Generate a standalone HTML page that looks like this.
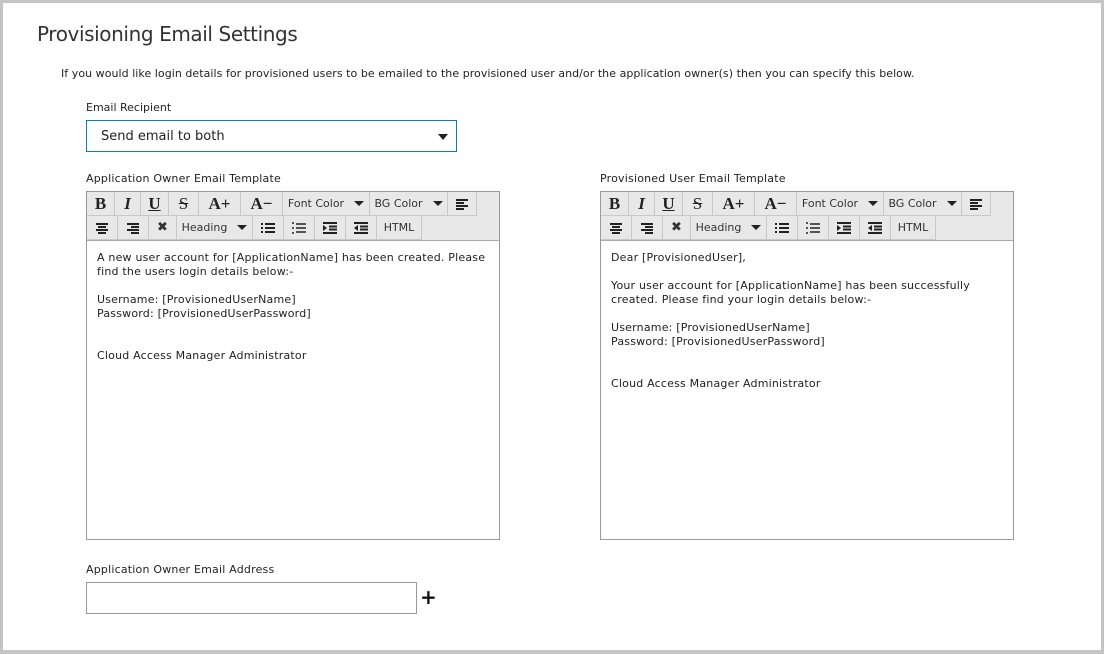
<!DOCTYPE html>
<html><head><style>
*{box-sizing:border-box;margin:0;padding:0}
body{width:1104px;height:654px;background:#c4c4c4;font-family:"DejaVu Sans","Liberation Sans",sans-serif;position:relative;overflow:hidden}
.page{position:absolute;left:3px;top:3px;width:1098px;height:647px;background:#fff}
.abs{position:absolute}
h1{position:absolute;left:34px;top:19px;font-weight:normal;font-size:20px;color:#333;font-family:"DejaVu Sans",sans-serif;letter-spacing:-0.4px}
.t{font-size:11px;color:#222;letter-spacing:0}
.sel{position:absolute;left:83px;top:117px;width:371px;height:32px;border:1px solid #0a7bc1;font-size:13px;color:#222;padding:8px 0 0 14px}
.sel:after{content:"";position:absolute;right:8px;top:13px;border:5px solid transparent;border-top:6px solid #222;border-bottom:0}
.ed{position:absolute;width:414px;height:349px;border:1px solid #999;background:#fff}
.tb{height:49px;background:#e8e8e8;border-bottom:1px solid #aaa;position:relative}
.b{position:absolute;height:24px;border-right:1px solid #c8c8c8;border-bottom:1px solid #c8c8c8;background:#e8e8e8;font-size:11px;color:#333;text-align:center;line-height:23px}
.b.f{font-family:"Liberation Serif",serif;font-weight:bold;font-size:17px;color:#222}
.dd:after{content:"";display:inline-block;margin-left:10px;border:5px solid transparent;border-top:5px solid #222;border-bottom:0;vertical-align:1px}
.body{padding:10px;font-size:11px;line-height:14px;color:#222;letter-spacing:0.2px;white-space:nowrap}
.ic{display:inline-block;vertical-align:middle}
</style></head><body><div class="page">
<h1>Provisioning Email Settings</h1>
<div class="abs t" style="left:58px;top:64px;letter-spacing:0.05px">If you would like login details for provisioned users to be emailed to the provisioned user and/or the application owner(s) then you can specify this below.</div>
<div class="abs t" style="left:83px;top:98px">Email Recipient</div>
<div class="sel">Send email to both</div>
<div class="abs t" style="left:83px;top:169px;letter-spacing:0.2px">Application Owner Email Template</div>
<div class="abs t" style="left:597px;top:169px;letter-spacing:0.2px">Provisioned User Email Template</div>

<div class="ed" style="left:83px;top:188px" id="e1"></div>
<div class="ed" style="left:597px;top:188px" id="e2"></div>

<div class="abs t" style="left:83px;top:560px;letter-spacing:0.2px">Application Owner Email Address</div>
<div class="abs" style="left:83px;top:579px;width:331px;height:32px;border:1px solid #999"></div>
<div class="abs" style="left:417px;top:582px;font-size:20px;font-weight:bold;color:#111">+</div>
</div>
<template id="tb"><div class="tb">
<div class="b f" style="left:0;width:28px;top:0">B</div>
<div class="b f" style="left:28px;width:26px;top:0;font-style:italic">I</div>
<div class="b f" style="left:54px;width:28px;top:0;text-decoration:underline">U</div>
<div class="b f" style="left:82px;width:30px;top:0;text-decoration:line-through;font-weight:normal">S</div>
<div class="b f" style="left:112px;width:42px;top:0">A+</div>
<div class="b f" style="left:154px;width:42px;top:0">A&minus;</div>
<div class="b dd" style="left:196px;width:87px;top:0">Font Color</div>
<div class="b dd" style="left:283px;width:78px;top:0">BG Color</div>
<div class="b" style="left:361px;width:29px;top:0"><svg class="ic" width="14" height="12"><path d="M1 2h12M1 5h8M1 8h12M1 11h8" stroke="#222" stroke-width="2"/></svg></div>
<div class="b" style="left:0;width:31px;top:24px"><svg class="ic" width="14" height="12"><path d="M1 2h12M3 5h8M1 8h12M3 11h8" stroke="#222" stroke-width="2"/></svg></div>
<div class="b" style="left:31px;width:31px;top:24px"><svg class="ic" width="14" height="12"><path d="M1 2h12M5 5h8M1 8h12M5 11h8" stroke="#222" stroke-width="2"/></svg></div>
<div class="b" style="left:62px;width:28px;top:24px;font-weight:bold;font-size:13px">&#10006;</div>
<div class="b dd" style="left:90px;width:76px;top:24px">Heading</div>
<div class="b" style="left:166px;width:31px;top:24px"><svg class="ic" width="14" height="12"><path d="M0 2h2M0 6h2M0 10h2M4 2h10M4 6h10M4 10h10" stroke="#222" stroke-width="2"/></svg></div>
<div class="b" style="left:197px;width:31px;top:24px"><svg class="ic" width="14" height="12"><path d="M0 1h2M0 6h2M0 11h2M4 2h10M4 6h10M4 10h10" stroke="#222" stroke-width="1.6"/></svg></div>
<div class="b" style="left:228px;width:31px;top:24px"><svg class="ic" width="14" height="12"><path d="M0 1h14M6 4.5h8M6 7.5h8M0 11h14" stroke="#222" stroke-width="2"/><path d="M0 3l4 3-4 3z" fill="#222"/></svg></div>
<div class="b" style="left:259px;width:31px;top:24px"><svg class="ic" width="14" height="12"><path d="M0 1h14M6 4.5h8M6 7.5h8M0 11h14" stroke="#222" stroke-width="2"/><path d="M4 3l-4 3 4 3z" fill="#222"/></svg></div>
<div class="b" style="left:290px;width:45px;top:24px">HTML</div>
</div></template>
<script>
var t=document.getElementById('tb').innerHTML;
document.getElementById('e1').innerHTML=t+'<div class="body">A new user account for [ApplicationName] has been created. Please<br>find the users login details below:-<br><br>Username: [ProvisionedUserName]<br>Password: [ProvisionedUserPassword]<br><br><br>Cloud Access Manager Administrator</div>';
document.getElementById('e2').innerHTML=t+'<div class="body">Dear [ProvisionedUser],<br><br>Your user account for [ApplicationName] has been successfully<br>created. Please find your login details below:-<br><br>Username: [ProvisionedUserName]<br>Password: [ProvisionedUserPassword]<br><br><br>Cloud Access Manager Administrator</div>';
</script>
</body></html>
